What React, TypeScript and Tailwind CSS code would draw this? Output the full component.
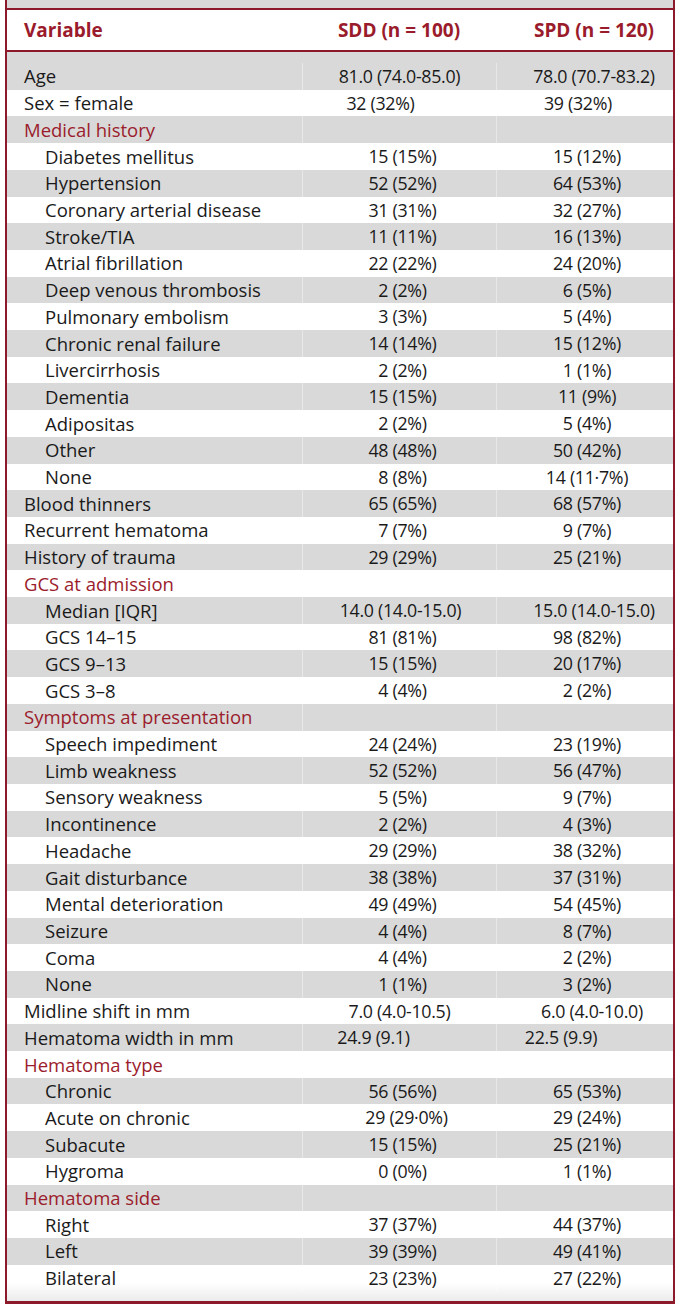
import React from 'react';

type Row = {
  label: string;
  sdd?: string;
  spd?: string;
  kind?: 'top' | 'section' | 'sub';
  c2?: string;
  c3?: string;
};

const rows: Row[] = [
  { label: 'Age', sdd: '81.0 (74.0-85.0)', spd: '78.0 (70.7-83.2)', kind: 'top', c2: 'pr-[6px]', c3: 'pl-[18px]' },
  { label: 'Sex = female', sdd: '32 (32%)', spd: '39 (32%)', kind: 'top', c2: 'pr-[44px]', c3: 'pr-[18px]' },
  { label: 'Medical history', kind: 'section' },
  { label: 'Diabetes mellitus', sdd: '15 (15%)', spd: '15 (12%)', kind: 'sub' },
  { label: 'Hypertension', sdd: '52 (52%)', spd: '64 (53%)', kind: 'sub' },
  { label: 'Coronary arterial disease', sdd: '31 (31%)', spd: '32 (27%)', kind: 'sub' },
  { label: 'Stroke/TIA', sdd: '11 (11%)', spd: '16 (13%)', kind: 'sub' },
  { label: 'Atrial fibrillation', sdd: '22 (22%)', spd: '24 (20%)', kind: 'sub' },
  { label: 'Deep venous thrombosis', sdd: '2 (2%)', spd: '6 (5%)', kind: 'sub' },
  { label: 'Pulmonary embolism', sdd: '3 (3%)', spd: '5 (4%)', kind: 'sub' },
  { label: 'Chronic renal failure', sdd: '14 (14%)', spd: '15 (12%)', kind: 'sub' },
  { label: 'Livercirrhosis', sdd: '2 (2%)', spd: '1 (1%)', kind: 'sub' },
  { label: 'Dementia', sdd: '15 (15%)', spd: '11 (9%)', kind: 'sub' },
  { label: 'Adipositas', sdd: '2 (2%)', spd: '5 (4%)', kind: 'sub' },
  { label: 'Other', sdd: '48 (48%)', spd: '50 (42%)', kind: 'sub' },
  { label: 'None', sdd: '8 (8%)', spd: '14 (11·7%)', kind: 'sub' },
  { label: 'Blood thinners', sdd: '65 (65%)', spd: '68 (57%)', kind: 'top' },
  { label: 'Recurrent hematoma', sdd: '7 (7%)', spd: '9 (7%)', kind: 'top' },
  { label: 'History of trauma', sdd: '29 (29%)', spd: '25 (21%)', kind: 'top' },
  { label: 'GCS at admission', kind: 'section' },
  { label: 'Median [IQR]', sdd: '14.0 (14.0-15.0)', spd: '15.0 (14.0-15.0)', kind: 'sub', c2: 'pr-[4px]', c3: 'pl-[18px]' },
  { label: 'GCS 14–15', sdd: '81 (81%)', spd: '98 (82%)', kind: 'sub' },
  { label: 'GCS 9–13', sdd: '15 (15%)', spd: '20 (17%)', kind: 'sub' },
  { label: 'GCS 3–8', sdd: '4 (4%)', spd: '2 (2%)', kind: 'sub' },
  { label: 'Symptoms at presentation', kind: 'section' },
  { label: 'Speech impediment', sdd: '24 (24%)', spd: '23 (19%)', kind: 'sub' },
  { label: 'Limb weakness', sdd: '52 (52%)', spd: '56 (47%)', kind: 'sub' },
  { label: 'Sensory weakness', sdd: '5 (5%)', spd: '9 (7%)', kind: 'sub' },
  { label: 'Incontinence', sdd: '2 (2%)', spd: '4 (3%)', kind: 'sub' },
  { label: 'Headache', sdd: '29 (29%)', spd: '38 (32%)', kind: 'sub' },
  { label: 'Gait disturbance', sdd: '38 (38%)', spd: '37 (31%)', kind: 'sub' },
  { label: 'Mental deterioration', sdd: '49 (49%)', spd: '54 (45%)', kind: 'sub' },
  { label: 'Seizure', sdd: '4 (4%)', spd: '8 (7%)', kind: 'sub' },
  { label: 'Coma', sdd: '4 (4%)', spd: '2 (2%)', kind: 'sub' },
  { label: 'None', sdd: '1 (1%)', spd: '3 (2%)', kind: 'sub' },
  { label: 'Midline shift in mm', sdd: '7.0 (4.0-10.5)', spd: '6.0 (4.0-10.0)', kind: 'top', c2: 'pr-[6px]', c3: 'pl-[14px]' },
  { label: 'Hematoma width in mm', sdd: '24.9 (9.1)', spd: '22.5 (9.9)', kind: 'top', c2: 'pr-[58px]', c3: 'pr-[52px]' },
  { label: 'Hematoma type', kind: 'section' },
  { label: 'Chronic', sdd: '56 (56%)', spd: '65 (53%)', kind: 'sub' },
  { label: 'Acute on chronic', sdd: '29 (29·0%)', spd: '29 (24%)', kind: 'sub', c2: 'pl-[14px]' },
  { label: 'Subacute', sdd: '15 (15%)', spd: '25 (21%)', kind: 'sub' },
  { label: 'Hygroma', sdd: '0 (0%)', spd: '1 (1%)', kind: 'sub' },
  { label: 'Hematoma side', kind: 'section' },
  { label: 'Right', sdd: '37 (37%)', spd: '44 (37%)', kind: 'sub' },
  { label: 'Left', sdd: '39 (39%)', spd: '49 (41%)', kind: 'sub' },
  { label: 'Bilateral', sdd: '23 (23%)', spd: '27 (22%)', kind: 'sub' },
];

const font = { fontFamily: '"Open Sans", "Liberation Sans", sans-serif' };

const TableRow: React.FC<{ row: Row; index: number; last: boolean }> = ({ row, index, last }) => {
  const gray = index % 2 === 0;
  let bg = gray ? 'bg-[#d9d9d9]' : 'bg-white';
  if (last) bg = 'bg-linear-to-b from-white via-white to-[#ebebeb]';
  const pad = index === 0 ? 'pt-[11px]' : last ? 'pb-[10px]' : '';
  const labelCls =
    row.kind === 'section'
      ? 'pl-[17px] text-[#9b1c2c]'
      : row.kind === 'sub'
      ? 'pl-[38px] text-[#1a1a1a]'
      : 'pl-[17px] text-[#1a1a1a]';
  return (
    <div className={`flex ${bg} ${pad}`}>
      <div className={`w-[296px] h-[26.71px] flex items-center border-r border-white/40 text-[18.5px] tracking-normal ${labelCls}`}>
        {row.label}
      </div>
      <div className={`w-[194px] h-[26.71px] flex items-center justify-center border-r border-white/40 pl-[6px] ${row.c2 ?? ''}`}>
        {row.sdd}
      </div>
      <div className={`w-[176px] h-[26.71px] flex items-center justify-center pl-[4px] ${row.c3 ?? ''}`}>
        {row.spd}
      </div>
    </div>
  );
};

export default function App() {
  return (
    <div className="bg-white w-[690px] h-[1308px] text-[17.8px] text-[#1a1a1a] tracking-[-0.3px]" style={font}>
      <div className="ml-[5px] w-[670px] border-x-2 border-b-[3px] border-[#8c1a2b]">
        <div className="h-[8px] bg-[#d9d9d9]" />
        <div className="flex h-[44px] items-center border-y-2 border-[#8c1a2b] bg-white font-bold text-[#9a1b2b] text-[19px] tracking-normal">
          <div className="w-[296px] pl-[17px]">Variable</div>
          <div className="w-[194px] text-center pr-[2px]">SDD (n = 100)</div>
          <div className="w-[176px] text-center pl-[18px]">SPD (n = 120)</div>
        </div>
        {rows.map((r, i) => (
          <TableRow key={i} row={r} index={i} last={i === rows.length - 1} />
        ))}
      </div>
    </div>
  );
}
